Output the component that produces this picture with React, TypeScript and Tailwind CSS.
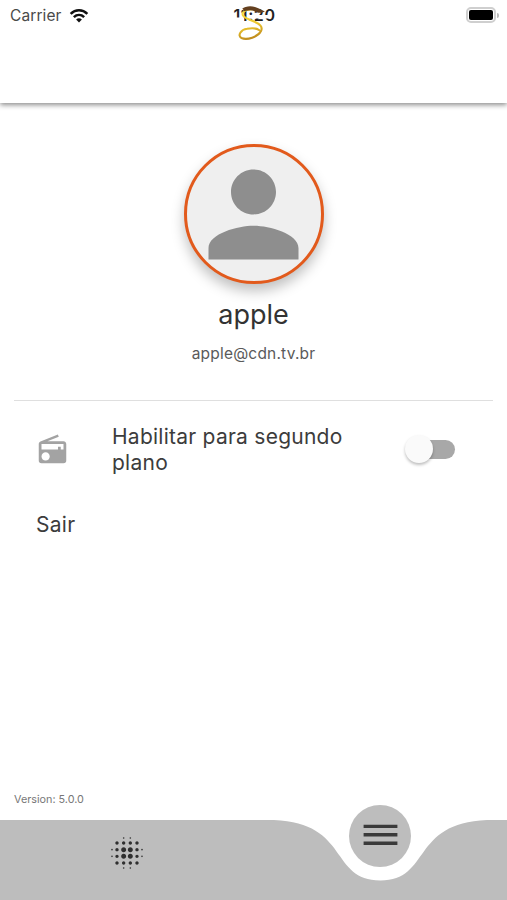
import { useState } from 'react';
import { MdBlurOn, MdPerson, MdRadio } from 'react-icons/md';

function WifiIcon() {
  return (
    <svg width="20" height="15" viewBox="0 0 21 16" fill="none" stroke="#111" strokeWidth="2.7">
      <path d="M1.6 6.2C6.7 1.2 14.3 1.2 19.4 6.2" />
      <path d="M5 9.8C8.2 6.8 12.8 6.8 16 9.8" />
      <path d="M7.4 12.2L10.5 15.4L13.6 12.2C11.8 10.6 9.2 10.6 7.4 12.2Z" fill="#111" stroke="none" />
    </svg>
  );
}

function BrandMark() {
  return (
    <svg width="44" height="40" viewBox="0 0 44 40" fill="none">
      <defs>
        <linearGradient id="gold" gradientUnits="userSpaceOnUse" x1="8" y1="5" x2="16" y2="36">
          <stop offset="0" stopColor="#f6dc3c" />
          <stop offset="0.55" stopColor="#ecc62e" />
          <stop offset="1" stopColor="#b9831a" />
        </linearGradient>
      </defs>
      {/* knocks out part of the clock behind the mark */}
      <path d="M-3 13.500H8V19H-3ZM12 11H34V14.500H12Z" fill="#fff" />
      <path
        d="M22 6C15 4 7 6 6.500 10C6.500 14 13 15 18 17.500C24 20 27 23 25 27C22 33 11 36.500 5.500 34C1 31.500 5 25.500 11 24.800C16 24 21 24.500 23 26"
        stroke="url(#gold)"
        strokeWidth="2.1"
        strokeLinecap="round"
      />
      <path d="M6 5C9 2 15 1.500 19 3C23 4 25 6 29 7.500C25 9.500 21 9 18 7C14 5.500 10 7 7.500 7.500C8.500 6 8 5 6 5Z" fill="#64401f" />
    </svg>
  );
}

function StatusBar() {
  return (
    <div className="flex h-[30px] items-center justify-between pl-[10px] pr-[8px]">
      <div className="flex w-[120px] items-center gap-[7px]">
        <span className="pt-px text-[15.5px] leading-[20px] tracking-[0.1px] text-[#4a4a4a]">Carrier</span>
        <WifiIcon />
      </div>
      <div className="w-[80px] text-center">
        <span className="text-[16px] font-semibold tracking-[0.6px] text-[#222]">11:20</span>
      </div>
      <div className="flex w-[120px] items-center justify-end gap-px">
        <div className="h-[16px] w-[30px] rounded-[5px] border-2 border-[#cfcfcf] p-px">
          <div className="h-full w-full rounded-[2px] bg-black" />
        </div>
        <div className="h-[5px] w-[2px] rounded-r bg-[#bbb]" />
      </div>
    </div>
  );
}

function Switch({ checked, onChange }: { checked: boolean; onChange: () => void }) {
  return (
    <button
      type="button"
      role="switch"
      aria-checked={checked}
      onClick={onChange}
      className="flex h-[28px] w-[50px] items-center"
    >
      <span className="ml-[5px] flex h-[19px] w-[45px] shrink-0 items-center rounded-full bg-[#a8a8a8]">
        <span
          className={`-ml-[5px] h-[28px] w-[28px] shrink-0 rounded-full bg-[#fafafa] shadow-[0_2px_3px_rgba(0,0,0,0.25)] ${
            checked ? 'translate-x-[22px]' : ''
          }`}
        />
      </span>
    </button>
  );
}

function BottomNav() {
  return (
    <nav className="relative h-[80px] shrink-0">
      <svg className="block" width="507" height="80" viewBox="0 0 507 80">
        <path
          d="M0 0H274C350 3 329.500 60.500 380.500 60.500C431 60.500 410.500 3 487 0H507V80H0Z"
          fill="#bdbdbd"
        />
      </svg>
      <button type="button" className="absolute left-[107px] top-[13px] text-[#2f2f2f]">
        <MdBlurOn size={40} />
      </button>
      <button
        type="button"
        className="absolute left-[349px] top-[-15px] h-[62px] w-[62px] rounded-full bg-[#bdbdbd]"
      >
        <svg width="62" height="62" viewBox="0 0 62 62" fill="#3a3a3a">
          <path d="M14.600 19.700H48.400V23.100H14.600ZM14.600 28.100H48.400V31.500H14.600ZM14.600 36.500H48.400V39.900H14.600Z" />
        </svg>
      </button>
    </nav>
  );
}

export default function App() {
  const [background, setBackground] = useState(false);

  return (
    <div className="flex h-[900px] w-[507px] flex-col overflow-hidden bg-white font-['Inter',sans-serif] text-[#3c3c3c]">
      <header className="relative h-[103px] shrink-0 bg-white shadow-[0_2px_5px_rgba(0,0,0,0.45)]">
        <StatusBar />
        <div className="absolute left-[236px] top-[4px]">
          <BrandMark />
        </div>
      </header>

      <main className="flex grow flex-col">
        <section className="flex flex-col items-center pt-[41px]">
          <div className="flex h-[140px] w-[140px] justify-center rounded-full border-3 border-[#e25a1c] bg-[#efefef] text-[#8e8e8e] shadow-[0_7px_13px_rgba(0,0,0,0.25)]">
            <MdPerson size={135} className="-mt-[0.5px] shrink-0" />
          </div>
          <h1 className="mt-[14px] text-[27px] leading-[34px] text-[#333]">apple</h1>
          <p className="mt-[12px] text-[15.5px] leading-[20px] tracking-[0.2px] text-[#5a5a5a]">apple@cdn.tv.br</p>
        </section>

        <hr className="mx-[14px] mt-[36px] border-[#dfdfdf]" />

        <section className="flex items-center pl-[36px] pr-[52px] pt-[22px]">
          <MdRadio size={33} className="shrink-0 text-[#a3a3a3]" />
          <p className="ml-[43px] w-[250px] pt-px text-[21px] leading-[25.5px] tracking-[0.25px]">
            Habilitar para segundo plano
          </p>
          <div className="ml-auto">
            <Switch checked={background} onChange={() => setBackground(!background)} />
          </div>
        </section>

        <button type="button" className="ml-[36px] mt-[37px] self-start text-[21px] leading-[26px] tracking-[0.3px]">
          Sair
        </button>

        <p className="mb-[13px] ml-[14px] mt-auto text-[10.8px] leading-[14px] text-[#777]">Version: 5.0.0</p>
      </main>

      <BottomNav />
    </div>
  );
}
